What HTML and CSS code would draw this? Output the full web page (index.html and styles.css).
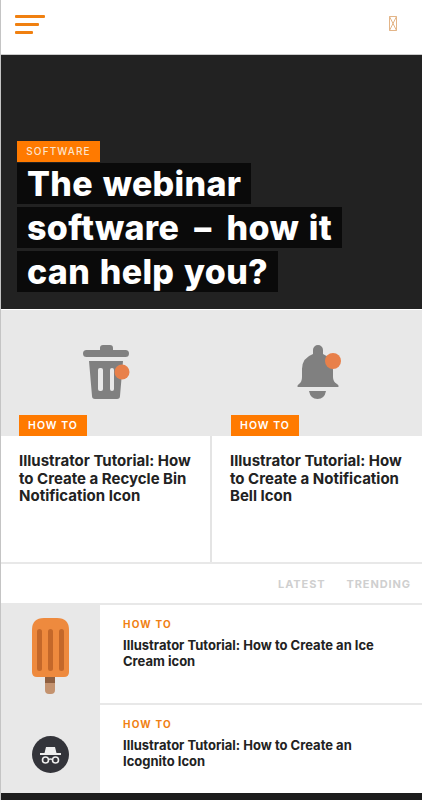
FILE: index.html
```html
<!DOCTYPE html>
<html lang="en">
<head>
    <meta charset="UTF-8">
    <meta name="viewport" content="width=device-width, initial-scale=1.0">
    <title>The webinar software</title>
    <link rel="stylesheet" href="styles.css">
</head>
<body>
    <div class="app-container">
        <div class="header">
            <div class="menu-icon">
                <span class="bar-long"></span>
                <span class="bar-mid"></span>
                <span class="bar-short"></span>
            </div>
            <svg class="missing-icon" width="8" height="15" viewBox="0 0 8 15">
                <path d="M.5.5h7v14h-7zM.5.5l7 14M7.5.5l-7 14" fill="none" stroke="#e3b588" stroke-width="1"/>
            </svg>
        </div>

        <div class="hero">
            <span class="tag hero-tag">SOFTWARE</span>
            <h1 class="hero-title"><span>The webinar software &thinsp;–&thinsp; how it can help you?</span></h1>
        </div>

        <div class="cards">
            <div class="card">
                <div class="card-image">
                    <svg class="bin-icon" width="47" height="54" viewBox="0 0 47 54">
                        <path d="M17 5V3q0-3 3-3h7q3 0 3 3v2h12.500q3.500 0 3.500 3.500T42.500 12h-39Q0 12 0 8.500T3.500 5z" fill="#808080"/>
                        <path d="M6 16h34l-3 35q0 3-3 3H12q-3 0-3-3z" fill="#808080"/>
                        <rect x="15" y="23" width="5" height="23" rx="2" fill="#e8e8e8"/>
                        <rect x="27" y="23" width="4" height="23" rx="2" fill="#e8e8e8"/>
                        <circle cx="39" cy="27" r="7.500" fill="#e8804a"/>
                    </svg>
                    <span class="tag card-tag">HOW TO</span>
                </div>
                <h2 class="card-title">Illustrator Tutorial: How to Create a Recycle Bin Notification Icon</h2>
            </div>
            <div class="card">
                <div class="card-image">
                    <svg class="bell-icon" width="44" height="54" viewBox="0 0 44 54">
                        <path d="M16 9V5a5 5 0 0 1 10 0v4q10 4 10 16v7q0 5 4 7 2 1 1.500 3H.5Q0 40 2 39q3-2 3-7v-8Q5 13 16 9z" fill="#808080"/>
                        <path d="M12 46h17q-1.500 8-8.500 8T12 46z" fill="#808080"/>
                        <circle cx="36" cy="16" r="8" fill="#e8804a"/>
                    </svg>
                    <span class="tag card-tag">HOW TO</span>
                </div>
                <h2 class="card-title">Illustrator Tutorial: How to Create a Notification Bell Icon</h2>
            </div>
        </div>

        <div class="tabs">
            <span>LATEST</span>
            <span>TRENDING</span>
        </div>

        <div class="list-row">
            <div class="thumb">
                <svg width="37" height="76" viewBox="0 0 37 76">
                    <rect x="13" y="56" width="10" height="20" rx="4" fill="#c4936f"/>
                    <rect x="13" y="59" width="10" height="6" fill="#8f5f3f"/>
                    <path d="M0 12Q0 0 12 0h13q12 0 12 12v42q0 5-5 5H5q-5 0-5-5z" fill="#ee8a3e"/>
                    <rect x="5" y="11" width="5" height="42" rx="2.500" fill="#c4682a"/>
                    <rect x="16" y="11" width="5" height="42" rx="2.500" fill="#c4682a"/>
                    <rect x="27" y="11" width="5" height="42" rx="2.500" fill="#c4682a"/>
                </svg>
            </div>
            <div class="row-text">
                <span class="row-label">HOW TO</span>
                <h3 class="row-title">Illustrator Tutorial: How to Create an Ice Cream icon</h3>
            </div>
        </div>

        <div class="list-row last-row">
            <div class="thumb incognito-thumb">
                <svg width="37" height="37" viewBox="0 0 37 37">
                    <circle cx="18.500" cy="18.500" r="18.500" fill="#33343a"/>
                    <path d="M14 11h9l1.500 6H29v2H8v-2h4.500z" fill="#eee"/>
                    <circle cx="13.500" cy="24" r="3" fill="none" stroke="#eee" stroke-width="1.600"/>
                    <circle cx="23.500" cy="24" r="3" fill="none" stroke="#eee" stroke-width="1.600"/>
                    <path d="M16.500 23.500q2-1 4 0" fill="none" stroke="#eee" stroke-width="1.300"/>
                </svg>
            </div>
            <div class="row-text">
                <span class="row-label">HOW TO</span>
                <h3 class="row-title">Illustrator Tutorial: How to Create an Icognito Icon</h3>
            </div>
        </div>

        <div class="footer"></div>
    </div>
</body>
</html>
```

FILE: styles.css
```css
* {
    margin: 0;
    padding: 0;
    box-sizing: border-box;
}

body {
    font-family: Inter, 'Liberation Sans', sans-serif;
    background: #fff;
    color: #222;
}

.app-container {
    height: 800px;
    overflow: hidden;
    border-left: 1px solid #c4c4c4;
}

.header {
    height: 55px;
    display: flex;
    justify-content: space-between;
    align-items: flex-start;
    padding: 15px 25px 0 14px;
    border-bottom: 1px solid #ccc;
}

.menu-icon {
    display: flex;
    flex-direction: column;
    gap: 5px;
}

.menu-icon span {
    display: block;
    height: 3px;
    background: #f08010;
    border-radius: 1px;
}

.bar-long {
    width: 30px;
}

.bar-mid {
    width: 24px;
}

.bar-short {
    width: 18px;
}

.missing-icon {
    margin-top: 1px;
}

.hero {
    height: 254px;
    background: #222;
    padding: 86px 16px 0 17px;
    margin-left: -1px;
}

.tag {
    display: inline-block;
    background: #ff7a00;
    color: #fff;
    font-size: 10.500px;
    font-weight: 500;
    letter-spacing: 1px;
}

.hero-tag {
    display: block;
    width: 83px;
    height: 21px;
    line-height: 21px;
    font-size: 10px;
    letter-spacing: 1.100px;
    text-align: center;
    color: #fbe3cc;
}

.hero-title {
    width: 340px;
    font-size: 34px;
    font-weight: 800;
    line-height: 44px;
    letter-spacing: 0.300px;
    word-spacing: 2px;
    color: #fff;
}

.hero-title span {
    background: #0a0a0a;
    padding: 0 10px;
    -webkit-box-decoration-break: clone;
    box-decoration-break: clone;
}

.cards {
    display: grid;
    grid-template-columns: 209px 1fr;
    height: 255px;
    border-bottom: 2px solid #e8e8e8;
}

.card-image {
    height: 126px;
    margin-top: 1px;
    background: #e8e8e8;
    display: flex;
    flex-direction: column;
    align-items: center;
    padding-top: 35px;
    position: relative;
}

.bin-icon {
    margin-left: 1px;
}

.bell-icon {
    margin-left: 5px;
}

.card-tag {
    position: absolute;
    left: 18px;
    bottom: 0;
    width: 68px;
    height: 21px;
    line-height: 21px;
    text-align: center;
    font-weight: 600;
}

.card + .card .card-tag {
    left: 21px;
}

.card-title {
    height: 126px;
    font-size: 15px;
    font-weight: 700;
    line-height: 17.500px;
    padding: 16px 10px 0 18px;
}

.card + .card .card-title {
    border-left: 2px solid #e4e4e4;
}

.tabs {
    height: 41px;
    display: flex;
    justify-content: flex-end;
    align-items: center;
    gap: 21px;
    padding-right: 11px;
    font-size: 11px;
    font-weight: 700;
    letter-spacing: 0.900px;
    color: #cfcfcf;
    border-bottom: 2px solid #e8e8e8;
}

.list-row {
    height: 100px;
    display: flex;
    border-bottom: 2px solid #e8e8e8;
}

.last-row {
    height: 88px;
    border-bottom: none;
}

.thumb {
    width: 99px;
    flex-shrink: 0;
    background: #e8e8e8;
    display: flex;
    justify-content: center;
    padding-top: 13px;
}

.incognito-thumb {
    padding-top: 31px;
}

.row-text {
    padding: 13px 17px 0 23px;
}

.row-label {
    display: block;
    font-size: 10px;
    font-weight: 700;
    letter-spacing: 1.200px;
    color: #f07f13;
    line-height: 12px;
    margin-bottom: 7px;
}

.row-title {
    font-size: 13px;
    font-weight: 700;
    line-height: 16px;
}

.footer {
    height: 7px;
    margin-left: -1px;
    background: #1c1c1c;
}
```
